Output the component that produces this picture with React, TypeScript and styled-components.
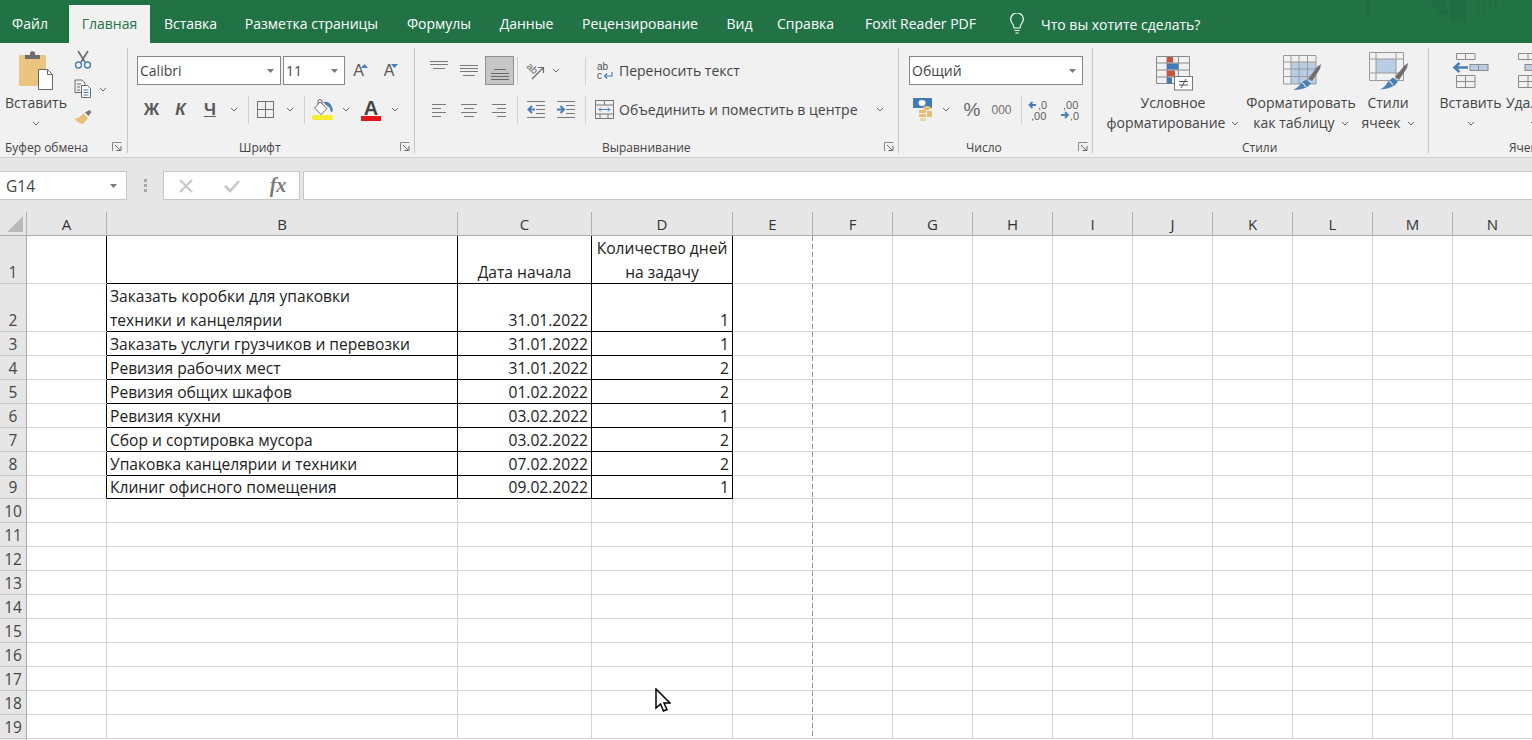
import React from "react";
import styled, { createGlobalStyle } from "styled-components";

const UI = `"Open Sans", "Noto Sans", sans-serif`;
const CELL = `"Open Sans", "Noto Sans", sans-serif`;
const GREEN = "#217346";
const RIBBON = "#f1f1f1";
const CHROME = "#e6e6e6";
const INK = "#444444";
const GLYPH = "#6e6e6e";
const BLUE = "#4a7fb5";
const TINT = "#b9cde5";

const Global = createGlobalStyle`
  html, body { margin: 0; padding: 0; height: 100%; overflow: hidden; background: #fff; }
  #root { height: 100%; }
`;

const Page = styled.div`
  position: relative;
  width: 1532px;
  height: 740px;
  overflow: hidden;
  display: flex;
  flex-direction: column;
  font-family: ${UI};
  background: #fff;
`;

/* ---------- tabs ---------- */
const TabBar = styled.div`
  height: 43px;
  flex: none;
  display: flex;
  align-items: flex-end;
  background: ${GREEN};
  position: relative;
`;
const Tab = styled.div<{ $w: number; $active?: boolean; $after?: number }>`
  width: ${(p) => p.$w}px;
  margin-right: ${(p) => p.$after ?? 0}px;
  height: 38px;
  line-height: 38px;
  text-align: center;
  font-size: 14px;
  white-space: nowrap;
  color: ${(p) => (p.$active ? GREEN : "#ffffff")};
  background: ${(p) => (p.$active ? RIBBON : "transparent")};
`;
const Hint = styled.div`
  height: 38px;
  margin-left: 13px;
  display: flex;
  align-items: center;
  gap: 16px;
  font-size: 14px;
  color: #fff;
`;
const Ghost = styled.svg`
  position: absolute;
  left: 1350px;
  top: 0;
  opacity: 0.45;
`;

/* ---------- ribbon ---------- */
const Ribbon = styled.div`
  height: 115px;
  flex: none;
  box-sizing: border-box;
  display: flex;
  align-items: flex-start;
  padding-top: 5px;
  background: ${RIBBON};
  border-bottom: 1px solid #cfcfcf;
`;
const Group = styled.div<{ $w: number }>`
  width: ${(p) => p.$w}px;
  flex: none;
  height: 108px;
  display: flex;
  flex-direction: column;
  overflow: hidden;
`;
const GroupSep = styled.div`
  width: 1px;
  height: 105px;
  flex: none;
  background: #c6c6c6;
`;
const Stack = styled.div`
  flex: 1;
  padding-top: 8px;
  display: flex;
  flex-direction: column;
  gap: 10px;
`;
const Inline = styled.div`
  flex: 1;
  padding-top: 2px;
  display: flex;
  align-items: flex-start;
`;
const GroupLabel = styled.div<{ $pl: number; $pr?: number }>`
  height: 18px;
  flex: none;
  padding: 0 ${(p) => p.$pr ?? 5}px 0 ${(p) => p.$pl}px;
  display: flex;
  align-items: center;
  justify-content: space-between;
  font-size: 12px;
  color: ${INK};
  white-space: nowrap;
`;
const Row = styled.div<{ $pl?: number }>`
  height: 29px;
  display: flex;
  align-items: center;
  padding-left: ${(p) => p.$pl ?? 0}px;
`;
const Slot = styled.div<{ $w: number }>`
  width: ${(p) => p.$w}px;
  height: 29px;
  flex: none;
  display: flex;
  align-items: center;
  justify-content: center;
  color: ${INK};
`;
const ActiveSlot = styled(Slot)`
  box-sizing: border-box;
  background: #c6c6c6;
  border: 1px solid #8f8f8f;
`;
const VSep = styled.div`
  width: 1px;
  height: 28px;
  flex: none;
  background: #d0d0d0;
`;
const Select = styled.div<{ $w: number; $gap?: number }>`
  width: ${(p) => p.$w}px;
  margin-right: ${(p) => p.$gap ?? 0}px;
  height: 29px;
  flex: none;
  box-sizing: border-box;
  padding: 0 6px 0 2px;
  display: flex;
  align-items: center;
  justify-content: space-between;
  background: #fff;
  border: 1px solid #868686;
  font-family: ${CELL};
  font-size: 14px;
  color: ${INK};
`;
const TextAction = styled.div<{ $pl: number; $gap: number }>`
  height: 29px;
  padding-left: ${(p) => p.$pl}px;
  display: flex;
  align-items: center;
  gap: ${(p) => p.$gap}px;
  font-size: 14px;
  color: ${INK};
  white-space: nowrap;
`;
const Large = styled.div<{ $w: number; $after?: number; $pre?: number }>`
  width: ${(p) => p.$w}px;
  margin-left: ${(p) => p.$pre ?? 0}px;
  margin-right: ${(p) => p.$after ?? 0}px;
  flex: none;
  display: flex;
  flex-direction: column;
  align-items: center;
  font-size: 14px;
  line-height: 20px;
  color: ${INK};
  white-space: nowrap;
`;
const LargeIcon = styled.div`
  height: 43px;
  display: flex;
  align-items: flex-start;
  justify-content: center;
`;
const LargeLine = styled.div`
  height: 20px;
  display: flex;
  align-items: center;
  justify-content: center;
  gap: 6px;
`;
const MiniColumn = styled.div`
  display: flex;
  flex-direction: column;
  gap: 9px;
  margin-left: 5px;
`;
const MiniRow = styled.div`
  height: 20px;
  display: flex;
  align-items: center;
  gap: 7px;
`;
const Letter = styled.span<{ $bold?: boolean; $italic?: boolean; $under?: boolean; $size?: number; $color?: string }>`
  font-family: "Liberation Sans", sans-serif;
  font-size: ${(p) => p.$size ?? 17}px;
  font-weight: ${(p) => (p.$bold ? 700 : 400)};
  font-style: ${(p) => (p.$italic ? "italic" : "normal")};
  color: ${(p) => p.$color ?? "#5a5a5a"};
  text-decoration: ${(p) => (p.$under ? "underline" : "none")};
  line-height: 1;
`;
const ColorTool = styled.div`
  display: flex;
  flex-direction: column;
  align-items: center;
  width: 20px;
`;
const Swatch = styled.div`
  width: 20px;
  height: 5px;
  margin-top: -2px;
  background: #e8141a;
`;
const GrowTool = styled.div`
  display: flex;
  align-items: flex-start;
`;
const PlainDigits = styled.span`
  font-family: "Liberation Sans", sans-serif;
  font-size: 12px;
  color: ${GLYPH};
`;

/* ---------- formula bar ---------- */
const FormulaZone = styled.div`
  height: 54px;
  flex: none;
  box-sizing: border-box;
  padding: 13px 0 12px;
  display: flex;
  background: ${CHROME};
`;
const NameBox = styled.div`
  width: 127px;
  box-sizing: border-box;
  padding: 0 9px 0 6px;
  display: flex;
  align-items: center;
  justify-content: space-between;
  background: #fff;
  border: 1px solid #c6c6c6;
  border-left: 0;
  font-family: ${CELL};
  font-size: 15.500px;
  color: ${INK};
`;
const Grip = styled.div`
  width: 36px;
  display: flex;
  flex-direction: column;
  align-items: center;
  justify-content: center;
  gap: 2px;
`;
const GripDot = styled.div`
  width: 3px;
  height: 3px;
  background: #a9a9a9;
`;
const FnBox = styled.div`
  width: 137px;
  box-sizing: border-box;
  display: grid;
  grid-template-columns: 44px 48px 44px;
  align-items: center;
  justify-items: center;
  background: #fff;
  border: 1px solid #c6c6c6;
`;
const FxText = styled.span`
  font-family: "Liberation Serif", serif;
  font-style: italic;
  font-weight: 700;
  font-size: 20px;
  color: #7a7a7a;
`;
const FormulaInput = styled.div`
  flex: 1;
  margin-left: 3px;
  background: #fff;
  border: 1px solid #c6c6c6;
  border-right: 0;
`;

/* ---------- sheet ---------- */
const Sheet = styled.div<{ $rows: string }>`
  flex: 1;
  min-height: 0;
  display: grid;
  grid-template-columns: 27px 80px 351px 134px 141px repeat(10, 80px);
  grid-template-rows: ${(p) => p.$rows};
  font-family: ${CELL};
  font-size: 15.600px;
  color: #222;
`;
const Corner = styled.div`
  background: ${CHROME};
  box-sizing: border-box;
  border-right: 1px solid #b0b0b0;
  border-bottom: 1px solid #ababab;
  display: flex;
  align-items: flex-end;
  justify-content: flex-end;
  padding: 0 3px 3px 0;
`;
const ColHead = styled.div`
  background: ${CHROME};
  box-sizing: border-box;
  border-right: 1px solid #b0b0b0;
  border-bottom: 1px solid #ababab;
  display: flex;
  align-items: center;
  justify-content: center;
  font-size: 15px;
  color: #333;
`;
const RowHead = styled.div`
  background: ${CHROME};
  box-sizing: border-box;
  border-right: 1px solid #ababab;
  border-bottom: 1px solid #c8c8c8;
  display: flex;
  align-items: flex-end;
  justify-content: center;
  line-height: 21px;
  font-size: 15.500px;
  color: #444;
`;
type Edge = "grid" | "black";
const edge = (e: Edge = "grid") => (e === "black" ? "1px solid #000" : "1px solid #d4d4d4");
const Cell = styled.div<{ $r?: Edge; $b?: Edge; $align?: string }>`
  box-sizing: border-box;
  border-right: ${(p) => edge(p.$r)};
  border-bottom: ${(p) => edge(p.$b)};
  display: flex;
  flex-direction: column;
  justify-content: flex-end;
  padding: 0 3px;
  line-height: 24px;
  text-align: ${(p) => p.$align ?? "left"};
  white-space: nowrap;
  overflow: hidden;
`;
const PageBreakCell = styled.div`
  box-sizing: border-box;
  border-bottom: 1px solid #d4d4d4;
  background-image: linear-gradient(#969696 5px, transparent 5px);
  background-size: 1px 8px;
  background-position: right top;
  background-repeat: repeat-y;
`;
const CellLine = styled.div`
  transform: translateY(1px);
`;
const Pointer = styled.svg`
  position: absolute;
  left: 655px;
  top: 688px;
`;

/* ---------- icons ---------- */
const Chevron = () => (
  <svg width="8" height="5" viewBox="0 0 8 5"><path d="M1 1l3 3 3-3" fill="none" stroke="#666" strokeWidth="1" /></svg>
);
const Drop = () => (
  <svg width="7" height="4" viewBox="0 0 7 4"><path d="M0 0h7L3.500 4z" fill="#7a7a7a" /></svg>
);
const Launcher = () => (
  <svg width="10" height="10" viewBox="0 0 10 10">
    <path d="M.5 9V.5H9.500" fill="none" stroke="#8a8a8a" />
    <path d="M3 3l5 5M4.500 8.500H9V4" fill="none" stroke="#666" />
  </svg>
);
const PasteIcon = () => (
  <svg width="36" height="40" viewBox="0 0 36 40">
    <rect x="1" y="5" width="27" height="31" rx="1" fill="#ebc47f" />
    <path d="M7 9V5h5V2.500Q14.500 0 17 2.500V5h5v4z" fill="#6e6e6e" />
    <path d="M20.500 19.500h9l5 5v15h-14z" fill="#fff" stroke="#666" />
    <path d="M29.500 19.500v5h5" fill="none" stroke="#666" />
  </svg>
);
const ScissorsIcon = () => (
  <svg width="18" height="20" viewBox="0 0 18 20">
    <path d="M4 1l7 11M14 1L7 12" fill="none" stroke="#6a6a6a" strokeWidth="1.600" />
    <circle cx="4.500" cy="15" r="3" fill="none" stroke={BLUE} strokeWidth="1.400" />
    <circle cx="13.500" cy="15" r="3" fill="none" stroke={BLUE} strokeWidth="1.400" />
  </svg>
);
const CopyIcon = () => (
  <svg width="18" height="20" viewBox="0 0 18 20" fill="none">
    <path d="M7 13.500H1V1h7l3 3v2" stroke="#6a6a6a" />
    <path d="M7.500 6.500h6l3 3v9h-9z" fill="#fff" stroke="#6a6a6a" />
    <path d="M3 5h4M3 8h3M3 11h3" stroke="#6a6a6a" />
    <path d="M9.500 11h5M9.500 13.500h5M9.500 16h5" stroke={BLUE} />
  </svg>
);
const BrushIcon = () => (
  <svg width="18" height="18" viewBox="0 0 18 18">
    <path d="M11 3.500l3.500 3.500 3-4-2-2z" fill="#777" />
    <path d="M9.500 4.500l4.500 4.500-5 6-2-1-1 1-1-2-1 .5L.500 9.500l4-.5z" fill="#e9bf74" />
  </svg>
);
const Triangle = ({ down }: { down?: boolean }) => (
  <svg width="7" height="4" viewBox="0 0 7 4" style={{ marginTop: 1, marginLeft: -3 }}>
    <path d={down ? "M0 0h7L3.500 4z" : "M0 4h7L3.500 0z"} fill={BLUE} />
  </svg>
);
const BorderIcon = () => (
  <svg width="18" height="18" viewBox="0 0 18 18" fill="none" stroke="#707070">
    <rect x=".5" y=".5" width="16" height="16" /><path d="M8.500 1v15M1 8.500h15" />
  </svg>
);
const FillIcon = () => (
  <svg width="24" height="22" viewBox="0 0 24 22">
    <path d="M9 3l7 6.500-6 6L3.500 9z" fill="#fff" stroke="#666" />
    <path d="M7 5.500V2.500a2 2 0 0 1 4 0V5" fill="none" stroke="#666" />
    <path d="M12 3q7-1 9 5l1 4-2 1-1.500-4.500L15 6z" fill={BLUE} />
    <rect x="1" y="16" width="21" height="5" rx="1.500" fill="#f5ee2e" />
  </svg>
);
const Lines = ({ w = 18, h = 16, rows, color = "#7a7a7a" }: { w?: number; h?: number; rows: number[][]; color?: string }) => (
  <svg width={w} height={h} viewBox={`0 0 ${w} ${h}`}>
    {rows.map((r, i) => (
      <path key={i} d={`M${r[0]} ${r[2] + 0.5}H${r[1]}`} stroke={color} />
    ))}
  </svg>
);
const IndentIcon = ({ out }: { out?: boolean }) => (
  <svg width="19" height="17" viewBox="0 0 19 17">
    {[0.5, 4.5, 8.5, 12.5, 16.5].map((y, i) => (
      <path key={i} d={`M${i === 0 || i === 4 ? 0 : 9} ${y}H18`} stroke="#7a7a7a" />
    ))}
    <path d={out ? "M8 8.500H2M5 5L1.500 8.500 5 12" : "M0 8.500h6M3.500 5L7 8.500 3.500 12"} fill="none" stroke={BLUE} strokeWidth="2" />
  </svg>
);
const OrientIcon = () => (
  <svg width="20" height="20" viewBox="0 0 20 20">
    <text x="1" y="10" transform="rotate(45 6 8)" fontFamily="Liberation Sans" fontSize="10" fill="#666">ab</text>
    <path d="M7 18l11-11M13 6.500h5.500V12" fill="none" stroke="#666" strokeWidth="1.200" />
  </svg>
);
const WrapIcon = () => (
  <svg width="16" height="18" viewBox="0 0 16 18">
    <text x="0" y="8" fontFamily="Liberation Sans" fontSize="10" fill="#555">ab</text>
    <text x="0" y="17" fontFamily="Liberation Sans" fontSize="10" fill="#555">c</text>
    <path d="M15 10v4H8M10 11.500L7.500 14l2.500 2.500" fill="none" stroke={BLUE} strokeWidth="1.200" />
  </svg>
);
const MergeIcon = () => (
  <svg width="19" height="19" viewBox="0 0 19 19" fill="none">
    <rect x=".5" y=".5" width="18" height="18" stroke="#777" />
    <path d="M.5 5h18M.5 14h18M9.500 1v4M5 14v4.500M13 14v4.500" stroke="#777" />
    <path d="M4 9.500h11M6 7.500l-2 2 2 2M13 7.500l2 2-2 2" stroke={BLUE} />
  </svg>
);
const CurrencyIcon = () => (
  <svg width="20" height="23" viewBox="0 0 20 23">
    <rect x="0" y="0" width="19" height="10" fill="#3f7cb8" />
    <ellipse cx="9" cy="5" rx="3.500" ry="3" fill="#fff" />
    <ellipse cx="14" cy="10" rx="4" ry="2" fill="#e8bd72" />
    <rect x="6" y="12" width="7" height="3" fill="#e8bd72" />
    <rect x="6" y="16" width="7" height="3" fill="#e8bd72" />
    <rect x="7" y="20" width="6" height="3" fill="#f0d6a4" />
    <rect x="14" y="13" width="5" height="6" fill="#e8bd72" />
  </svg>
);
const DecimalIcon = ({ more }: { more?: boolean }) => (
  <svg width="20" height="22" viewBox="0 0 20 22" fontFamily="Liberation Sans" fontSize="11" fill="#5f5f5f">
    {more ? (
      <>
        <path d="M8 6H2M4.500 3L1.500 6l3 3" fill="none" stroke={BLUE} strokeWidth="1.800" />
        <text x="10" y="10">,0</text>
        <text x="3" y="21">,00</text>
      </>
    ) : (
      <>
        <text x="3" y="10">,00</text>
        <path d="M1 16h6M5 13l3 3-3 3" fill="none" stroke={BLUE} strokeWidth="1.800" />
        <text x="10" y="21">,0</text>
      </>
    )}
  </svg>
);
const CondIcon = () => (
  <svg width="40" height="42" viewBox="0 0 40 42" fill="none">
    <path d="M3.500 6.500h33v27h-33zM14 6.500v27M25.500 6.500v27M3.500 13h33M3.500 20h33M3.500 27h33" stroke="#8a8a8a" />
    <rect x="14" y="7" width="6" height="5.500" fill="#c9553f" />
    <rect x="14" y="13.500" width="11" height="6" fill="#3f7cb8" />
    <rect x="14" y="20.500" width="8" height="6" fill="#c9553f" />
    <rect x="14" y="27.500" width="5" height="6" fill="#3f7cb8" />
    <rect x="21.500" y="26.500" width="18" height="13.500" fill="#fff" stroke="#777" />
    <path d="M26 31.500h9M26 35h9M33 29l-5 9" stroke="#555" />
  </svg>
);
const TableIcon = () => (
  <svg width="44" height="42" viewBox="0 0 44 42" fill="none">
    <rect x="12" y="12" width="25" height="22" fill={TINT} />
    <path d="M4.500 5.500h32.500v28.500H4.500zM4.500 12h32.500M4.500 19h32.500M4.500 26.500h32.500M12 5.500V34M20 5.500V34M28.500 5.500V34" stroke="#9a9a9a" />
    <path d="M29 29l9-12 4-3-1 5-8 12z" fill="#6f6f6f" />
    <path d="M27 29.500l5 4q-4 6-18 6.500 6-3 8-7z" fill={BLUE} />
    <path d="M23 33q3 1 3.500 4" stroke="#fff" />
  </svg>
);
const StyleIcon = () => (
  <svg width="44" height="42" viewBox="0 0 44 42" fill="none">
    <rect x="10" y="9" width="20" height="14" fill={TINT} />
    <path d="M3.500 2.500h34v28h-34zM3.500 9h34M3.500 23h34M10 2.500v28M30 2.500v28" stroke="#9a9a9a" />
    <path d="M29 27l9-11 4-3-1 5-8 12z" fill="#6f6f6f" />
    <path d="M27 27.500l5 4q-4 7-18 8 6-3 8-8z" fill={BLUE} />
    <path d="M23 31q3 1 3.500 4" stroke="#fff" />
  </svg>
);
const InsertIcon = () => (
  <svg width="40" height="42" viewBox="0 0 40 42" fill="none">
    <path d="M5.500 3.500h18.500v6H5.500zM14.500 3.500v6M5.500 25.500h18.500v12H5.500zM5.500 31.500h18.500M14.500 25.500v12" stroke="#8a8a8a" />
    <rect x="19" y="14.500" width="18" height="6" fill={TINT} stroke="#8a8a8a" />
    <path d="M27.500 14.500v6" stroke="#8a8a8a" />
    <path d="M17 17.500H4M8.500 13l-5 4.500 5 4.500" stroke={BLUE} strokeWidth="2.500" />
  </svg>
);
const DeleteIcon = () => (
  <svg width="40" height="42" viewBox="0 0 40 42" fill="none">
    <path d="M4.500 3.500H40v6H4.500zM14 3.500v6M4.500 25.500H40v12H4.500zM4.500 31.500H40M14 25.500v12" stroke="#8a8a8a" />
    <rect x="11" y="14.500" width="29" height="6" fill={TINT} stroke="#8a8a8a" />
  </svg>
);
const Bulb = () => (
  <svg width="16" height="22" viewBox="0 0 16 22" fill="none" stroke="#fff" strokeWidth="1.200">
    <path d="M5 15q0-2.500-2-5a6.300 6.300 0 1 1 10 0q-2 2.500-2 5z" />
    <path d="M5.500 17.500h5M6.500 20h3" />
  </svg>
);

/* ---------- data ---------- */
const COLUMNS = ["A", "B", "C", "D", "E", "F", "G", "H", "I", "J", "K", "L", "M", "N"];
type Rec = { h?: number; b?: string[]; c?: string; d?: string[]; ch?: boolean; dh?: boolean };
const TABLE: Rec[] = [
  { h: 48, b: [""], c: "Дата начала", ch: true, d: ["Количество дней", "на задачу"], dh: true },
  { h: 48, b: ["Заказать коробки для упаковки", "техники и канцелярии"], c: "31.01.2022", d: ["1"] },
  { b: ["Заказать услуги грузчиков и перевозки"], c: "31.01.2022", d: ["1"] },
  { b: ["Ревизия рабочих мест"], c: "31.01.2022", d: ["2"] },
  { b: ["Ревизия общих шкафов"], c: "01.02.2022", d: ["2"] },
  { b: ["Ревизия кухни"], c: "03.02.2022", d: ["1"] },
  { b: ["Сбор и сортировка мусора"], c: "03.02.2022", d: ["2"] },
  { b: ["Упаковка канцелярии и техники"], c: "07.02.2022", d: ["2"] },
  { h: 23, b: ["Клиниг офисного помещения"], c: "09.02.2022", d: ["1"] },
];
const ROW_COUNT = 19;
const FILLER = COLUMNS.slice(5);

const rowTemplate = (() => {
  const rows = ["24px"];
  for (let i = 0; i < ROW_COUNT; i++) rows.push(`${TABLE[i]?.h ?? 24}px`);
  rows.push("2px");
  return rows.join(" ");
})();

function Grid() {
  return (
    <Sheet $rows={rowTemplate}>
      <Corner>
        <svg width="16" height="16" viewBox="0 0 16 16"><path d="M16 0v16H0z" fill="#b9b9b9" /></svg>
      </Corner>
      {COLUMNS.map((c) => <ColHead key={c}>{c}</ColHead>)}
      {Array.from({ length: ROW_COUNT }, (_, i) => {
        const t = TABLE[i];
        const side: Edge = t ? "black" : "grid";
        return (
          <React.Fragment key={i}>
            <RowHead>{i + 1}</RowHead>
            <Cell $r={side} />
            <Cell $r={side} $b={side}>
              {t?.b?.map((l, k) => <CellLine key={k}>{l || "\u00a0"}</CellLine>)}
            </Cell>
            <Cell $r={side} $b={side} $align={t?.ch ? "center" : "right"}>
              {t?.c && <CellLine>{t.c}</CellLine>}
            </Cell>
            <Cell $r={side} $b={side} $align={t?.dh ? "center" : "right"}>
              {t?.d?.map((l, k) => <CellLine key={k}>{l}</CellLine>)}
            </Cell>
            <PageBreakCell />
            {FILLER.map((c) => <Cell key={c} />)}
          </React.Fragment>
        );
      })}
      <RowHead />
    </Sheet>
  );
}

const L = (rows: number[][], w = 18, h = 16) => <Lines w={w} h={h} rows={rows} />;

export default function App() {
  return (
    <Page>
      <Global />
      <TabBar>
        <Tab $w={60} $after={9}>Файл</Tab>
        <Tab $w={81} $active>Главная</Tab>
        <Tab $w={81}>Вставка</Tab>
        <Tab $w={161}>Разметка страницы</Tab>
        <Tab $w={94}>Формулы</Tab>
        <Tab $w={81}>Данные</Tab>
        <Tab $w={146}>Рецензирование</Tab>
        <Tab $w={53}>Вид</Tab>
        <Tab $w={79}>Справка</Tab>
        <Tab $w={151}>Foxit Reader PDF</Tab>
        <Hint><Bulb />Что вы хотите сделать?</Hint>
        <Ghost width="160" height="24" viewBox="0 0 160 24" fill="#1f6640">
          <rect x="16" y="0" width="4" height="15" />
          <path d="M80 0h14l5 15h-8z" />
          <rect x="100" y="0" width="16" height="21" />
          <path d="M127 0h2v18h-2zM133 0h2v16h-2zM139 0h2v14h-2zM145 0h2v12h-2z" />
        </Ghost>
      </TabBar>

      <Ribbon>
        <Group $w={127}>
          <Inline>
            <Large $w={66} $pre={3}>
              <LargeIcon><PasteIcon /></LargeIcon>
              <LargeLine>Вставить</LargeLine>
              <LargeLine><Chevron /></LargeLine>
            </Large>
            <MiniColumn>
              <MiniRow><ScissorsIcon /></MiniRow>
              <MiniRow><CopyIcon /><Chevron /></MiniRow>
              <MiniRow><BrushIcon /></MiniRow>
            </MiniColumn>
          </Inline>
          <GroupLabel $pl={5}>Буфер обмена<Launcher /></GroupLabel>
        </Group>
        <GroupSep />

        <Group $w={286}>
          <Stack>
            <Row $pl={9}>
              <Select $w={144} $gap={2}>Calibri<Drop /></Select>
              <Select $w={62}>11<Drop /></Select>
              <Slot $w={31}><GrowTool><Letter $size={16}>A</Letter><Triangle /></GrowTool></Slot>
              <Slot $w={30}><GrowTool><Letter $size={16}>A</Letter><Triangle down /></GrowTool></Slot>
            </Row>
            <Row $pl={9}>
              <Slot $w={29}><Letter $bold>Ж</Letter></Slot>
              <Slot $w={29}><Letter $bold $italic>К</Letter></Slot>
              <Slot $w={30}><Letter $bold $under>Ч</Letter></Slot>
              <Slot $w={18}><Chevron /></Slot>
              <Slot $w={5} />
              <VSep />
              <Slot $w={34}><BorderIcon /></Slot>
              <Slot $w={14}><Chevron /></Slot>
              <Slot $w={7} />
              <VSep />
              <Slot $w={35}><FillIcon /></Slot>
              <Slot $w={12}><Chevron /></Slot>
              <Slot $w={38}>
                <ColorTool><Letter $bold $size={20} $color="#444">A</Letter><Swatch /></ColorTool>
              </Slot>
              <Slot $w={10}><Chevron /></Slot>
            </Row>
          </Stack>
          <GroupLabel $pl={111} $pr={4}>Шрифт<Launcher /></GroupLabel>
        </Group>
        <GroupSep />

        <Group $w={483}>
          <Stack>
            <Row $pl={10}>
              <Slot $w={28}><Lines w={18} h={29} rows={[[0, 18, 5], [0, 18, 8], [3, 15, 12]]} /></Slot>
              <Slot $w={32}><Lines w={18} h={29} rows={[[0, 18, 9], [0, 18, 12], [0, 18, 15], [3, 15, 19]]} /></Slot>
              <ActiveSlot $w={29}><Lines w={18} h={27} rows={[[3, 15, 12], [0, 18, 16], [0, 18, 19], [0, 18, 22]]} color="#6a6a6a" /></ActiveSlot>
              <Slot $w={3} />
              <VSep />
              <Slot $w={34}><OrientIcon /></Slot>
              <Slot $w={8}><Chevron /></Slot>
              <Slot $w={25} />
              <VSep />
              <TextAction $pl={11} $gap={6}><WrapIcon />Переносить текст</TextAction>
            </Row>
            <Row $pl={10}>
              <Slot $w={28}>{L([[0, 14, 2], [0, 9, 6], [0, 14, 10], [0, 9, 14]], 14)}</Slot>
              <Slot $w={32}>{L([[0, 16, 2], [3, 13, 6], [0, 16, 10], [3, 13, 14]], 16)}</Slot>
              <Slot $w={28}>{L([[0, 14, 2], [5, 14, 6], [0, 14, 10], [5, 14, 14]], 14)}</Slot>
              <Slot $w={4} />
              <VSep />
              <Slot $w={36}><IndentIcon out /></Slot>
              <Slot $w={24}><IndentIcon /></Slot>
              <Slot $w={7} />
              <VSep />
              <TextAction $pl={9} $gap={5}><MergeIcon />Объединить и поместить в центре<Slot $w={34}><Chevron /></Slot></TextAction>
            </Row>
          </Stack>
          <GroupLabel $pl={187} $pr={4}>Выравнивание<Launcher /></GroupLabel>
        </Group>
        <GroupSep />

        <Group $w={193}>
          <Stack>
            <Row $pl={10}>
              <Select $w={174}>Общий<Drop /></Select>
            </Row>
            <Row $pl={10}>
              <Slot $w={28}><CurrencyIcon /></Slot>
              <Slot $w={18}><Chevron /></Slot>
              <Slot $w={34}><Letter $size={19} $color="#666">%</Letter></Slot>
              <Slot $w={25}><PlainDigits>000</PlainDigits></Slot>
              <Slot $w={7} />
              <VSep />
              <Slot $w={32}><DecimalIcon more /></Slot>
              <Slot $w={32}><DecimalIcon /></Slot>
            </Row>
          </Stack>
          <GroupLabel $pl={67} $pr={4}>Число<Launcher /></GroupLabel>
        </Group>
        <GroupSep />

        <Group $w={335}>
          <Inline>
            <Large $w={140} $pre={10} $after={2}>
              <LargeIcon><CondIcon /></LargeIcon>
              <LargeLine>Условное</LargeLine>
              <LargeLine>форматирование<Chevron /></LargeLine>
            </Large>
            <Large $w={112} $after={3}>
              <LargeIcon><TableIcon /></LargeIcon>
              <LargeLine>Форматировать</LargeLine>
              <LargeLine>как таблицу<Chevron /></LargeLine>
            </Large>
            <Large $w={56}>
              <LargeIcon><StyleIcon /></LargeIcon>
              <LargeLine>Стили</LargeLine>
              <LargeLine>ячеек<Chevron /></LargeLine>
            </Large>
          </Inline>
          <GroupLabel $pl={149}>Стили</GroupLabel>
        </Group>
        <GroupSep />

        <Group $w={103}>
          <Inline>
            <Large $w={65} $pre={9} $after={2}>
              <LargeIcon><InsertIcon /></LargeIcon>
              <LargeLine>Вставить</LargeLine>
              <LargeLine><Chevron /></LargeLine>
            </Large>
            <Large $w={58}>
              <LargeIcon><DeleteIcon /></LargeIcon>
              <LargeLine>Удалить</LargeLine>
              <LargeLine><Chevron /></LargeLine>
            </Large>
          </Inline>
          <GroupLabel $pl={80}>Ячейки</GroupLabel>
        </Group>
      </Ribbon>

      <FormulaZone>
        <NameBox>G14<Drop /></NameBox>
        <Grip><GripDot /><GripDot /><GripDot /></Grip>
        <FnBox>
          <svg width="16" height="16" viewBox="0 0 16 16"><path d="M2 2l12 12M14 2L2 14" stroke="#c8c8c8" strokeWidth="2.200" /></svg>
          <svg width="18" height="16" viewBox="0 0 18 16"><path d="M2 8l5 5L16 3" fill="none" stroke="#c8c8c8" strokeWidth="2.600" /></svg>
          <FxText>fx</FxText>
        </FnBox>
        <FormulaInput />
      </FormulaZone>

      <Grid />

      <Pointer width="16" height="25" viewBox="0 0 16 25">
        <path d="M1 1v19l4.500-4 3 7 3.500-1.500-3-6.500h6z" fill="#fff" stroke="#000" strokeWidth="1.500" />
      </Pointer>
    </Page>
  );
}
